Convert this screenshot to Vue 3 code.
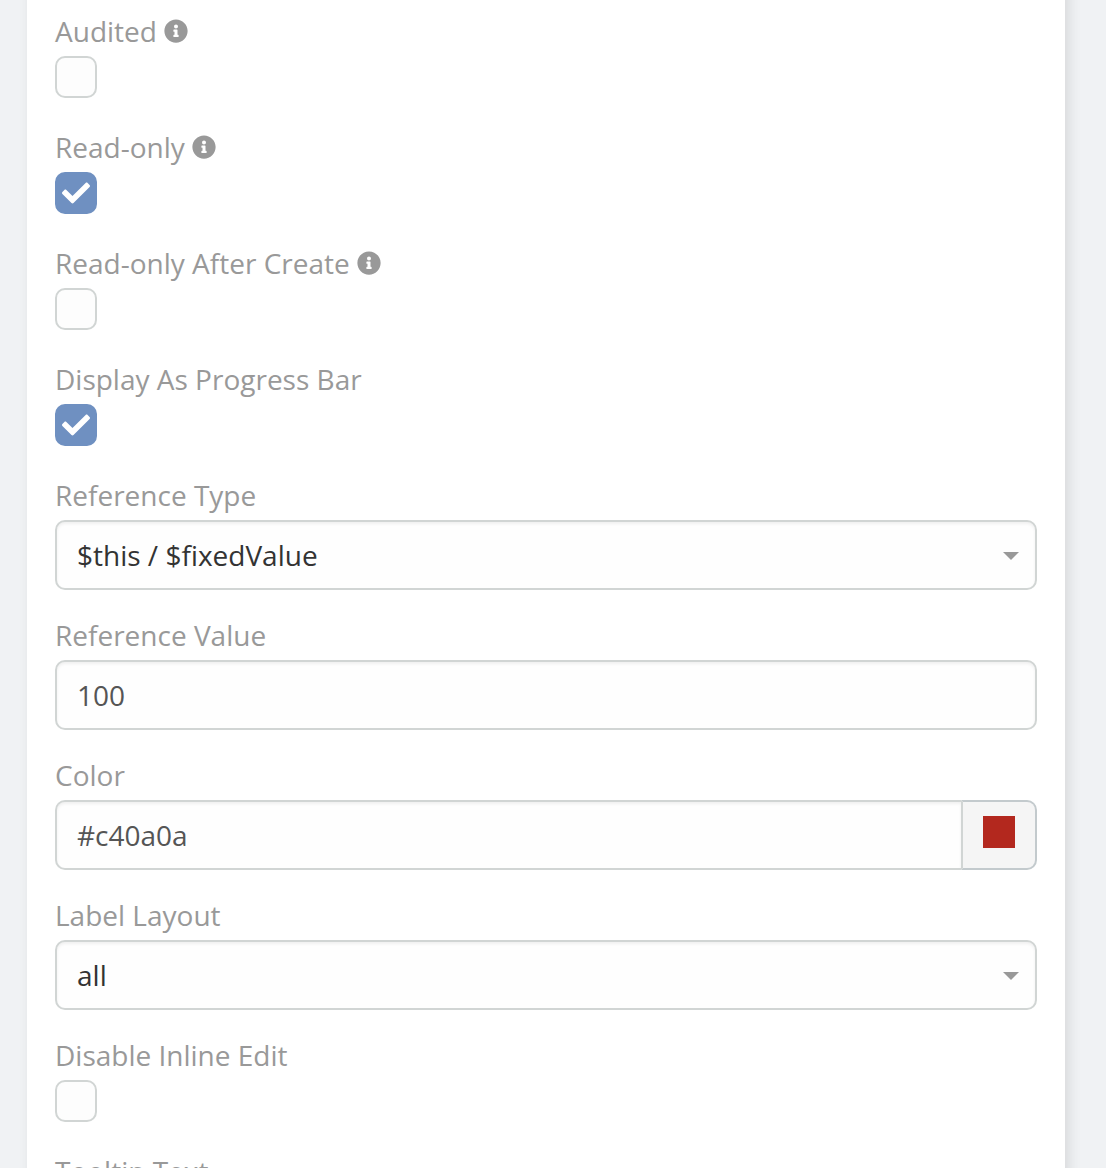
<script setup>
const fields = [
  { label: 'Audited', type: 'bool', value: false, info: true },
  { label: 'Read-only', type: 'bool', value: true, info: true },
  { label: 'Read-only After Create', type: 'bool', value: false, info: true },
  { label: 'Display As Progress Bar', type: 'bool', value: true },
  { label: 'Reference Type', type: 'enum', value: '$this / $fixedValue' },
  { label: 'Reference Value', type: 'text', value: '100' },
  { label: 'Color', type: 'color', value: '#c40a0a' },
  { label: 'Label Layout', type: 'enum', value: 'all' },
  { label: 'Disable Inline Edit', type: 'bool', value: false },
  { label: 'Tooltip Text', type: 'none' },
]
</script>

<template>
  <div class="page">
    <div class="panel">
      <div v-for="f in fields" :key="f.label" class="cell" :class="f.type">
        <div class="label">
          <span>{{ f.label }}</span>
          <svg v-if="f.info" class="info" viewBox="0 0 512 512">
            <path d="M256 8C119.043 8 8 119.083 8 256c0 136.997 111.043 248 248 248s248-111.003 248-248C504 119.083 392.957 8 256 8zm0 110c23.196 0 42 18.804 42 42s-18.804 42-42 42-42-18.804-42-42 18.804-42 42-42zm56 254c0 6.627-5.373 12-12 12h-88c-6.627 0-12-5.373-12-12v-24c0-6.627 5.373-12 12-12h12v-64h-12c-6.627 0-12-5.373-12-12v-24c0-6.627 5.373-12 12-12h64c6.627 0 12 5.373 12 12v100h12c6.627 0 12 5.373 12 12v24z" />
          </svg>
        </div>
        <div v-if="f.type === 'bool'" class="checkbox" :class="{ checked: f.value }">
          <svg v-if="f.value" viewBox="0 0 512 512">
            <path d="M173.898 439.404l-166.4-166.4c-9.997-9.997-9.997-26.206 0-36.204l36.203-36.204c9.997-9.998 26.207-9.998 36.204 0L192 312.69 432.095 72.596c9.997-9.997 26.207-9.997 36.204 0l36.203 36.204c9.997 9.997 9.997 26.206 0 36.204l-294.4 294.401c-9.998 9.997-26.207 9.997-36.204-.001z" />
          </svg>
        </div>
        <div v-else-if="f.type === 'color'" class="group">
          <div class="control">{{ f.value }}</div>
          <div class="addon"><i class="swatch"></i></div>
        </div>
        <div v-else-if="f.type !== 'none'" class="control">
          <span>{{ f.value }}</span>
          <i v-if="f.type === 'enum'" class="caret"></i>
        </div>
      </div>
    </div>
  </div>
</template>

<style>
body {
  overflow: hidden;
}
</style>

<style scoped>
.page {
  box-sizing: border-box;
  height: 1168px;
  padding: 0 41px 0 27px;
  overflow: hidden;
  background: #f0f2f4;
  font-family: "Open Sans", sans-serif;
  font-size: 28px;
  line-height: 40px;
}
.panel {
  box-sizing: border-box;
  height: 1300px;
  margin-top: -40px;
  padding: 51px 28px 0;
  background: #fff;
  box-shadow: 4px 0 12px rgba(0, 0, 0, 0.1);
}
.cell {
  margin-bottom: 26px;
}
.cell.bool {
  margin-bottom: 30px;
}
.label {
  display: flex;
  align-items: center;
  height: 40px;
  margin-bottom: 4px;
  color: #999;
}
.cell:first-child {
  padding-top: 0;
}
.info {
  width: 24px;
  height: 24px;
  margin: 0 0 0 7px;
  fill: #999;
}
.checkbox {
  box-sizing: border-box;
  display: flex;
  align-items: center;
  justify-content: center;
  width: 42px;
  height: 42px;
  margin-top: 5px;
  margin-bottom: -1px;
  border: 2px solid #d1d5d4;
  border-radius: 10px;
  background: #fdfdfd;
}
.checkbox.checked {
  border-color: #6f90c1;
  background: #6f90c1;
}
.checkbox svg {
  width: 28px;
  height: 28px;
  fill: #fff;
}
.control {
  box-sizing: border-box;
  display: flex;
  flex: 1;
  align-items: center;
  justify-content: space-between;
  height: 70px;
  padding: 0 16px 0 20px;
  border: 2px solid #d1d5d4;
  border-radius: 10px;
  background: #fefefe;
  box-shadow: inset 0 2px 3px rgba(0, 0, 0, 0.06);
  color: #555;
}
.enum .control,
.text .control,
.group {
  margin-top: 5px;
  margin-bottom: -1px;
}
.label {
  margin-bottom: 0;
}
.enum .control {
  color: #333;
}
.caret {
  margin-top: 2px;
  border: 8px solid transparent;
  border-top-color: #999;
  border-bottom: 0;
}
.group {
  display: flex;
}
.group .control {
  border-right: 0;
  border-radius: 10px 0 0 10px;
}
.addon {
  box-sizing: border-box;
  width: 76px;
  height: 70px;
  padding: 14px 0 0 20px;
  border: 2px solid #c3cacd;
  border-left-color: #d1d5d4;
  border-radius: 0 10px 10px 0;
  background: #f5f5f5;
}
.swatch {
  display: block;
  width: 32px;
  height: 32px;
  background: #b3281e;
}
</style>
